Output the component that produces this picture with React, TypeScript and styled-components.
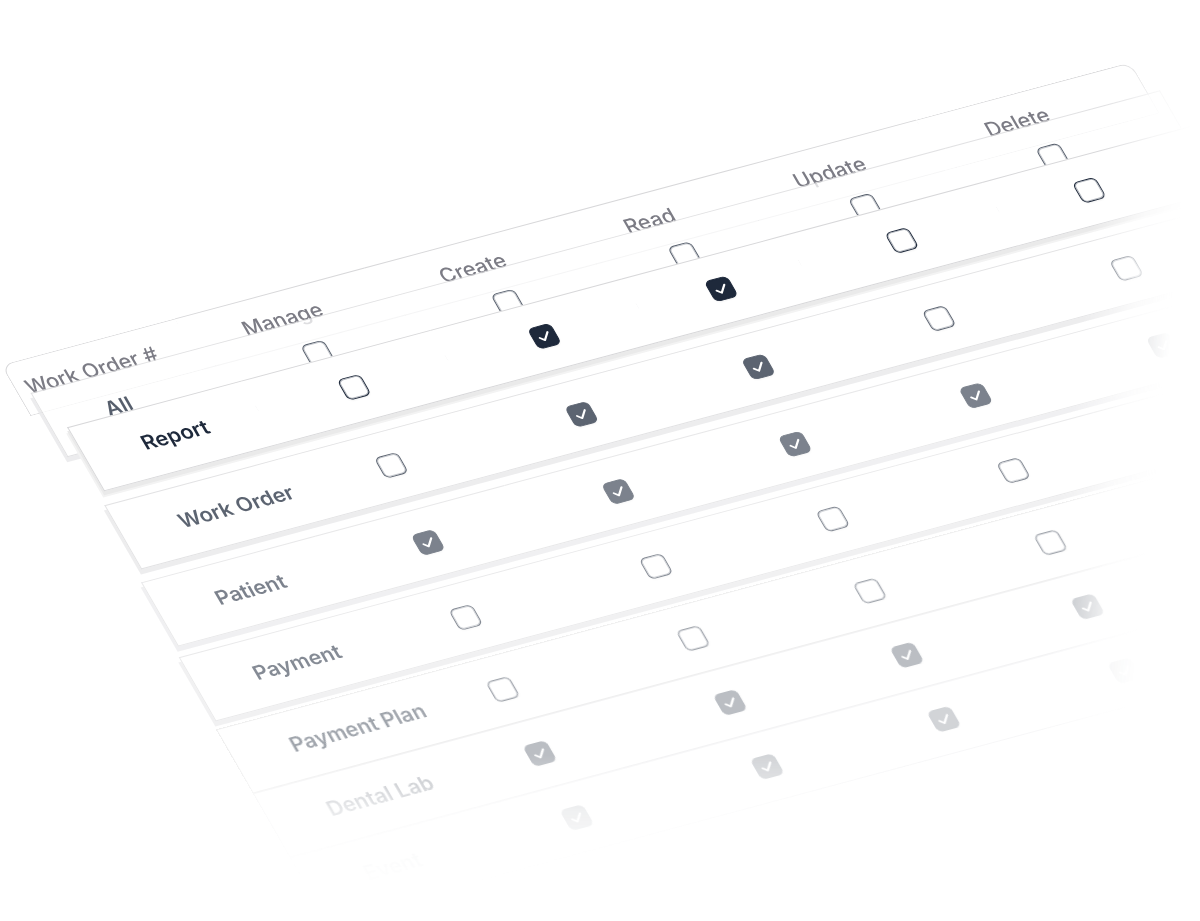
import React from "react";
import styled, { createGlobalStyle } from "styled-components";

const GlobalStyle = createGlobalStyle`
  *, *::before, *::after { box-sizing: border-box; }
  body {
    margin: 0;
    background: #fff;
    font-family: Inter, "Liberation Sans", sans-serif;
  }
`;

/* The far right and the bottom of the table fade into the page. */
const Stage = styled.main`
  height: 100vh;
  overflow: hidden;
  padding: 365px 0 0 1px;
  mask-image: linear-gradient(
      96deg,
      #000 86%,
      rgba(0, 0, 0, 0.55) 88.5%,
      rgba(0, 0, 0, 0.25) 90%,
      rgba(0, 0, 0, 0.07) 92%,
      transparent 93%
    ),
    linear-gradient(
      to bottom,
      #000 82%,
      rgba(0, 0, 0, 0.35) 88%,
      rgba(0, 0, 0, 0.08) 93%,
      transparent 96%
    );
  mask-composite: intersect;
`;

/* The table lies on an isometric plane: x runs up to the right, y down to the right. */
const PermissionTable = styled.table`
  width: 97.5%;
  table-layout: fixed;
  border-collapse: separate;
  border-spacing: 0;
  transform-origin: 0 0;
  transform: matrix(0.966, -0.259, 0.5, 0.866, 0, 0);
  font-size: 21px;
  line-height: 28px;
`;

const Col = styled.col<{ $width?: number }>`
  width: ${(p) => (p.$width ? `${p.$width}px` : "auto")};
`;

const HeaderRow = styled.tr`
  height: 59px;
`;

const HeaderCell = styled.th`
  padding: 0 4px 0 0;
  border: 0 solid #d8d8da;
  border-width: 1px 0;
  color: #7c7c85;
  font-weight: 500;
  text-align: center;

  &:first-child {
    padding-left: 10px;
    border-left-width: 1px;
    border-top-left-radius: 12px;
    text-align: left;
    white-space: nowrap;
  }

  &:last-child {
    padding-right: 42px;
    border-right-width: 1px;
    border-top-right-radius: 12px;
  }
`;

const shadows = {
  none: "none",
  soft: "-3px 5px 0 0 #e6e6e8",
  deep: "-2px 4px 0 0 #eaeaea, -4px 6px 0 0 #f3f3f3",
};

type Shadow = keyof typeof shadows;

const Row = styled.tr<{ $lift: number; $opacity: number; $shadow: Shadow }>`
  height: 74px;
  background: #fff;
  opacity: ${(p) => p.$opacity};
  box-shadow: ${(p) => shadows[p.$shadow]};
  transform: translate(${(p) => Math.round(p.$lift / 2)}px, ${(p) => -p.$lift}px);
`;

const Cell = styled.td`
  padding: 0;
  border: 0 solid #d8d8da;
  border-width: 1px 0;
  vertical-align: middle;

  &:last-child {
    padding-right: 38px;
    border-right-width: 1px;
  }
`;

const NameCell = styled.th`
  padding: 0 0 0 58px;
  border: 0 solid #d8d8da;
  border-width: 1px 0 1px 1px;
  color: #1e293b;
  font-weight: 600;
  text-align: left;
  white-space: nowrap;
`;

const Tick = styled.label`
  display: grid;
  justify-content: center;

  > * { grid-area: 1 / 1; }
`;

const TickInput = styled.input`
  appearance: none;
  width: 24px;
  height: 24px;
  margin: 0;
  border: 1px solid #1e293b;
  border-radius: 6px;
  background: #fff;
  box-shadow: inset 0 0 0 1px rgba(30, 41, 59, 0.35), 0 1px 2px rgba(0, 0, 0, 0.06);
  cursor: pointer;

  &:checked { background: #1e293b; }
  &:not(:checked) + svg { visibility: hidden; }
`;

const TickMark = styled.svg`
  width: 16px;
  height: 16px;
  place-self: center;
  fill: none;
  stroke: #fff;
  stroke-width: 2;
  stroke-linecap: round;
  stroke-linejoin: round;
  pointer-events: none;
`;

const actions = ["Manage", "Create", "Read", "Update", "Delete"];

interface Permission {
  name: string;
  granted: string[];
  lift: number;
  opacity: number;
  shadow: Shadow;
}

const permissions: Permission[] = [
  { name: "All", granted: [], lift: 23, opacity: 0.75, shadow: "soft" },
  { name: "Report", granted: ["Create", "Read"], lift: 53, opacity: 1, shadow: "deep" },
  { name: "Work Order", granted: ["Create", "Read"], lift: 39, opacity: 0.72, shadow: "soft" },
  { name: "Patient", granted: actions, lift: 26, opacity: 0.58, shadow: "soft" },
  { name: "Payment", granted: [], lift: 15, opacity: 0.54, shadow: "soft" },
  { name: "Payment Plan", granted: [], lift: 7, opacity: 0.42, shadow: "none" },
  { name: "Dental Lab", granted: actions, lift: 7, opacity: 0.3, shadow: "none" },
  { name: "Event", granted: actions, lift: 7, opacity: 0.2, shadow: "none" },
];

export default function App() {
  return (
    <>
      <GlobalStyle />
      <Stage>
        <PermissionTable>
          <colgroup>
            <Col $width={180} />
            <Col $width={196} />
            <Col $width={198} />
            <Col $width={168} />
            <Col $width={205} />
            <Col />
          </colgroup>
          <thead>
            <HeaderRow>
              <HeaderCell scope="col">Work Order #</HeaderCell>
              {actions.map((action) => (
                <HeaderCell key={action} scope="col">{action}</HeaderCell>
              ))}
            </HeaderRow>
          </thead>
          <tbody>
            {permissions.map((p) => (
              <Row key={p.name} $lift={p.lift} $opacity={p.opacity} $shadow={p.shadow}>
                <NameCell scope="row">{p.name}</NameCell>
                {actions.map((action) => (
                  <Cell key={action}>
                    <Tick>
                      <TickInput
                        type="checkbox"
                        aria-label={`${action} ${p.name}`}
                        defaultChecked={p.granted.includes(action)}
                      />
                      <TickMark viewBox="0 0 16 16" aria-hidden="true">
                        <path d="M3 8.5 6.5 12 13 4.5" />
                      </TickMark>
                    </Tick>
                  </Cell>
                ))}
              </Row>
            ))}
          </tbody>
        </PermissionTable>
      </Stage>
    </>
  );
}
